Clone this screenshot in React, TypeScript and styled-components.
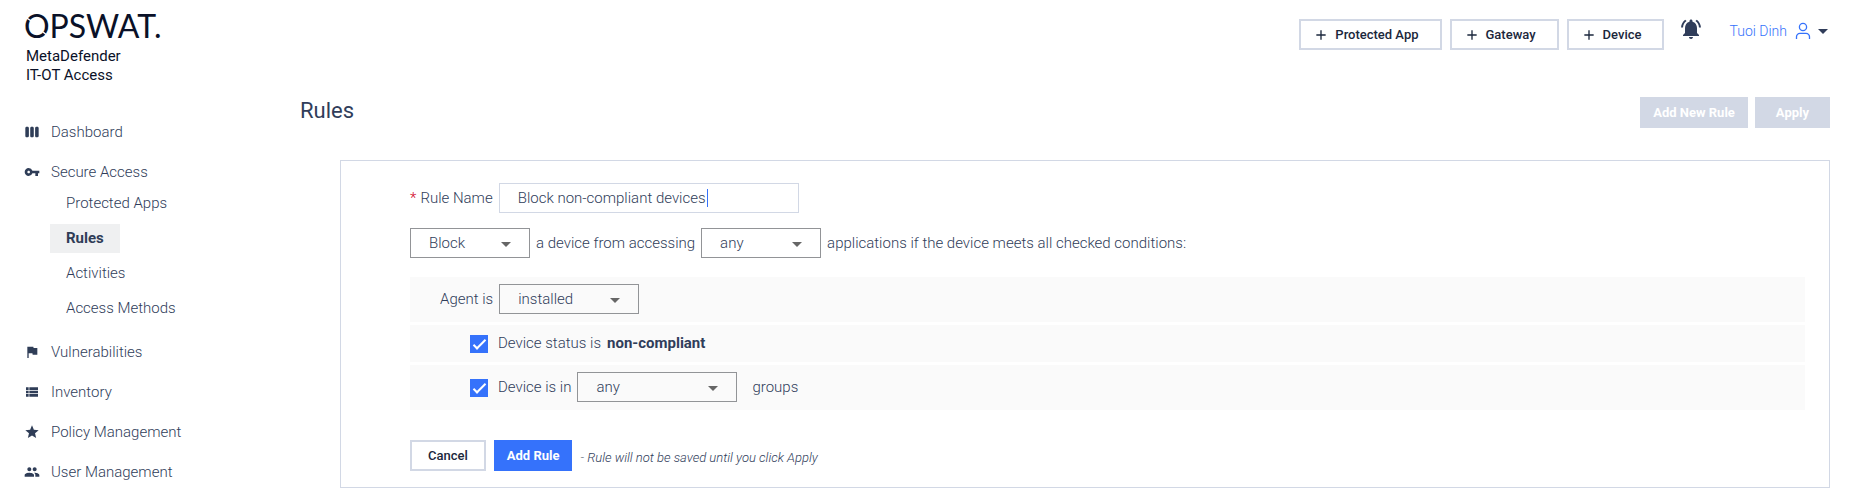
import React, { useState } from "react";
import styled, { createGlobalStyle, css } from "styled-components";
import {
  MdAdd,
  MdArrowDropDown,
  MdFlag,
  MdNotificationsActive,
  MdPeople,
  MdStar,
  MdViewList,
  MdViewWeek,
  MdVpnKey,
} from "react-icons/md";

const colors = {
  ink: "#303d5a",
  dark: "#1b273c",
  icon: "#2f3d57",
  brand: "#0a1128",
  border: "#d2d8e5",
  field: "#929497",
  blue: "#3572fb",
  row: "#fafafa",
};

const GlobalStyle = createGlobalStyle`
  *, *::before, *::after { box-sizing: border-box; }
  body {
    margin: 0;
    background: #fff;
    color: ${colors.ink};
    font: 300 15px/20px Roboto, "Liberation Sans", sans-serif;
  }
  button, input, select { font: inherit; color: inherit; }
`;

const Page = styled.div`
  display: grid;
  grid-template-columns: 300px minmax(0, 1fr);
`;

const Sidebar = styled.aside`
  padding: 6px 24px 9px;
`;

const Brand = styled.a`
  display: block;
  color: ${colors.brand};
  text-decoration: none;
`;

const LogoMark = styled.svg`
  display: block;
  width: 150px;
  height: 41px;
  fill: currentColor;
  font: 400 32px Lato, sans-serif;
`;

const ProductName = styled.span`
  display: block;
  padding-left: 2px;
  font-size: 15px;
  font-weight: 400;
  line-height: 19px;
`;

const NavList = styled.ul`
  display: flex;
  flex-direction: column;
  gap: 12px;
  margin: 33px 0 0;
  padding: 0;
  list-style: none;
`;

const NavLink = styled.a`
  display: flex;
  align-items: center;
  gap: 11px;
  height: 28px;
  color: ${colors.ink};
  text-decoration: none;
  svg {
    width: 16px;
    height: 16px;
    color: ${colors.icon};
  }
`;

const SubList = styled.ul`
  display: flex;
  flex-direction: column;
  align-items: flex-start;
  gap: 6px;
  margin: 0 0 0 26px;
  padding: 3px 0;
  list-style: none;
`;

const SubLink = styled.a<{ $active?: boolean }>`
  display: block;
  padding: 4px 16px 5px;
  color: ${colors.ink};
  text-decoration: none;
  ${(p) =>
    p.$active &&
    css`
      background: #eff0f1;
      color: ${colors.icon};
      font-weight: 700;
    `}
`;

const Main = styled.main`
  padding: 19px 38px 7px 0;
`;

const TopBar = styled.header`
  display: flex;
  justify-content: flex-end;
  align-items: flex-start;
  gap: 8px;
`;

const Button = styled.button<{ $variant?: "primary" | "muted" }>`
  display: inline-flex;
  align-items: center;
  height: 31px;
  padding: 0 16px;
  border: 2px solid ${colors.border};
  background: #fff;
  color: ${colors.dark};
  font-size: 13px;
  font-weight: 500;
  white-space: nowrap;
  cursor: pointer;
  ${(p) =>
    p.$variant &&
    css`
      padding: 0 11px;
      border-color: ${p.$variant === "primary" ? colors.blue : colors.border};
      background: ${p.$variant === "primary" ? colors.blue : colors.border};
      color: #fff;
      font-weight: 700;
    `}
`;

const CreateButton = styled(Button)`
  gap: 6px;
  padding: 0 21px 0 12px;
  svg {
    width: 16px;
    height: 16px;
  }
`;

const BellButton = styled.button`
  display: flex;
  margin: -2px 0 0 7px;
  padding: 0;
  border: 0;
  background: none;
  color: ${colors.ink};
  cursor: pointer;
  svg {
    width: 24px;
    height: 24px;
  }
`;

const UserMenu = styled.button`
  display: flex;
  align-items: center;
  height: 24px;
  margin-left: 18px;
  padding: 0;
  border: 0;
  background: none;
  color: ${colors.blue};
  font-size: 14px;
  cursor: pointer;
`;

const UserIcon = styled.svg`
  width: 16px;
  height: 18px;
  margin-left: 8px;
  fill: none;
  stroke: currentColor;
`;

const UserCaret = styled(MdArrowDropDown)`
  width: 24px;
  height: 24px;
  margin-right: -5px;
  color: ${colors.ink};
`;

const TitleRow = styled.div`
  display: flex;
  justify-content: space-between;
  align-items: flex-start;
  margin-top: 47px;
`;

const Title = styled.h1`
  margin: 0;
  font-size: 22px;
  font-weight: 400;
  line-height: 28px;
`;

const Actions = styled.div`
  display: flex;
  gap: 7px;
`;

const ApplyButton = styled(Button)`
  padding: 0 19px;
`;

const Panel = styled.form`
  margin: 32px 0 0 40px;
  padding: 22px 24px 16px 69px;
  border: 1px solid ${colors.border};
`;

const Line = styled.div`
  display: flex;
  align-items: center;
  gap: 6px;
`;

const Required = styled.span`
  margin-right: 4px;
  color: #d0021b;
`;

const TextInput = styled.input`
  width: 300px;
  height: 30px;
  padding: 0 18px;
  border: 1px solid ${colors.border};
  outline: 0;
  caret-color: ${colors.blue};
`;

const NameInput = styled(TextInput)<{ $showCaret: boolean }>`
  ${(p) =>
    p.$showCaret &&
    css`
      background: linear-gradient(${colors.blue}, ${colors.blue}) 207px 5px / 1px 18px no-repeat;
      caret-color: transparent;
    `}
`;

const SelectBox = styled.span<{ $width: number }>`
  position: relative;
  display: inline-flex;
  width: ${(p) => p.$width}px;
  svg {
    position: absolute;
    top: 4px;
    right: 12px;
    width: 24px;
    height: 24px;
    color: #666;
    pointer-events: none;
  }
`;

const NativeSelect = styled.select`
  width: 100%;
  height: 30px;
  padding: 0 18px;
  border: 1px solid ${colors.field};
  border-radius: 0;
  background: transparent;
  appearance: none;
`;

const RuleLine = styled(Line)`
  margin-top: 15px;
`;

const Conditions = styled.div`
  display: flex;
  flex-direction: column;
  gap: 3px;
  margin-top: 19px;
`;

const Condition = styled(Line)<{ $nested?: boolean }>`
  padding: 7px 0 8px ${(p) => (p.$nested ? 60 : 30)}px;
  background: ${colors.row};
`;

const CheckLabel = styled.label`
  display: flex;
  align-items: center;
  gap: 10px;
`;

const Checkbox = styled.input`
  width: 18px;
  height: 18px;
  margin: 3px 0 1px;
  appearance: none;
  background: ${colors.blue};
  display: grid;
  place-items: center;
  &::after {
    content: "";
    width: 13px;
    height: 6px;
    border: solid #fff;
    border-width: 0 0 2px 2px;
    transform: translateY(-1px) rotate(-45deg);
  }
  &:not(:checked) {
    background: #fff;
    border: 1px solid ${colors.field};
  }
`;

const Strong = styled.strong`
  font-weight: 700;
`;

const Trailing = styled.span`
  margin-left: 9px;
`;

const Footer = styled(Line)`
  gap: 8px;
  margin-top: 30px;
`;

const Note = styled.em`
  font-size: 13px;
  padding-top: 4px;
`;

function Select({ label, width, options }: { label: string; width: number; options: string[] }) {
  return (
    <SelectBox $width={width}>
      <NativeSelect aria-label={label}>
        {options.map((o) => (
          <option key={o}>{o}</option>
        ))}
      </NativeSelect>
      <MdArrowDropDown aria-hidden />
    </SelectBox>
  );
}

const accessPages = ["Protected Apps", "Rules", "Activities", "Access Methods"];

const navItems = [
  { label: "Dashboard", icon: MdViewWeek },
  { label: "Secure Access", icon: MdVpnKey, pages: accessPages },
  { label: "Vulnerabilities", icon: MdFlag },
  { label: "Inventory", icon: MdViewList },
  { label: "Policy Management", icon: MdStar },
  { label: "User Management", icon: MdPeople },
];

const initialName = "Block non-compliant devices";

export default function App() {
  const [name, setName] = useState(initialName);

  return (
    <>
      <GlobalStyle />
      <Page>
        <Sidebar>
          <Brand href="#">
            <LogoMark viewBox="0 0 150 41">
              <text x="0" y="32">OPSWAT.</text>
              {/* stencil cuts through the ring of the O */}
              <path d="M2 11.5l6 4M19 26l5 4" stroke="#fff" strokeWidth="1.5" />
            </LogoMark>
            <ProductName>MetaDefender</ProductName>
            <ProductName>IT-OT Access</ProductName>
          </Brand>
          <nav>
            <NavList>
              {navItems.map(({ label, icon: Icon, pages }) => (
                <li key={label}>
                  <NavLink href="#">
                    <Icon aria-hidden />
                    {label}
                  </NavLink>
                  {pages && (
                    <SubList>
                      {pages.map((page) => (
                        <li key={page}>
                          <SubLink href="#" $active={page === "Rules"}>
                            {page}
                          </SubLink>
                        </li>
                      ))}
                    </SubList>
                  )}
                </li>
              ))}
            </NavList>
          </nav>
        </Sidebar>

        <Main>
          <TopBar>
            {["Protected App", "Gateway", "Device"].map((item) => (
              <CreateButton key={item} type="button">
                <MdAdd aria-hidden />
                {item}
              </CreateButton>
            ))}
            <BellButton type="button" aria-label="Notifications">
              <MdNotificationsActive />
            </BellButton>
            <UserMenu type="button">
              Tuoi Dinh
              <UserIcon viewBox="0 0 16 18" strokeWidth="1.3" aria-hidden>
                <circle cx="8" cy="5" r="3.6" />
                <path d="M1.5 17v-2.2a3.4 3.4 0 0 1 3.4-3.4h6.2a3.4 3.4 0 0 1 3.4 3.4V17" />
              </UserIcon>
              <UserCaret aria-hidden />
            </UserMenu>
          </TopBar>

          <TitleRow>
            <Title>Rules</Title>
            <Actions>
              <Button type="button" $variant="muted">Add New Rule</Button>
              <ApplyButton type="button" $variant="muted">Apply</ApplyButton>
            </Actions>
          </TitleRow>

          <Panel onSubmit={(e) => e.preventDefault()}>
            <Line>
              <label htmlFor="rule-name">
                <Required>*</Required>
                Rule Name
              </label>
              <NameInput
                id="rule-name"
                $showCaret={name === initialName}
                value={name}
                onChange={(e) => setName(e.target.value)}
              />
            </Line>
            <RuleLine>
              <Select label="Action" width={120} options={["Block", "Allow"]} />
              a device from accessing
              <Select label="Applications" width={120} options={["any", "selected"]} />
              applications if the device meets all checked conditions:
            </RuleLine>

            <Conditions>
              <Condition>
                Agent is
                <Select label="Agent is" width={140} options={["installed", "not installed"]} />
              </Condition>
              <Condition $nested>
                <CheckLabel>
                  <Checkbox type="checkbox" defaultChecked />
                  Device status is
                </CheckLabel>
                <Strong>non-compliant</Strong>
              </Condition>
              <Condition $nested>
                <CheckLabel>
                  <Checkbox type="checkbox" defaultChecked />
                  Device is in
                </CheckLabel>
                <Select label="Device groups" width={160} options={["any", "selected"]} />
                <Trailing>groups</Trailing>
              </Condition>
            </Conditions>

            <Footer>
              <Button type="button">Cancel</Button>
              <Button type="submit" $variant="primary">Add Rule</Button>
              <Note>- Rule will not be saved until you click Apply</Note>
            </Footer>
          </Panel>
        </Main>
      </Page>
    </>
  );
}
